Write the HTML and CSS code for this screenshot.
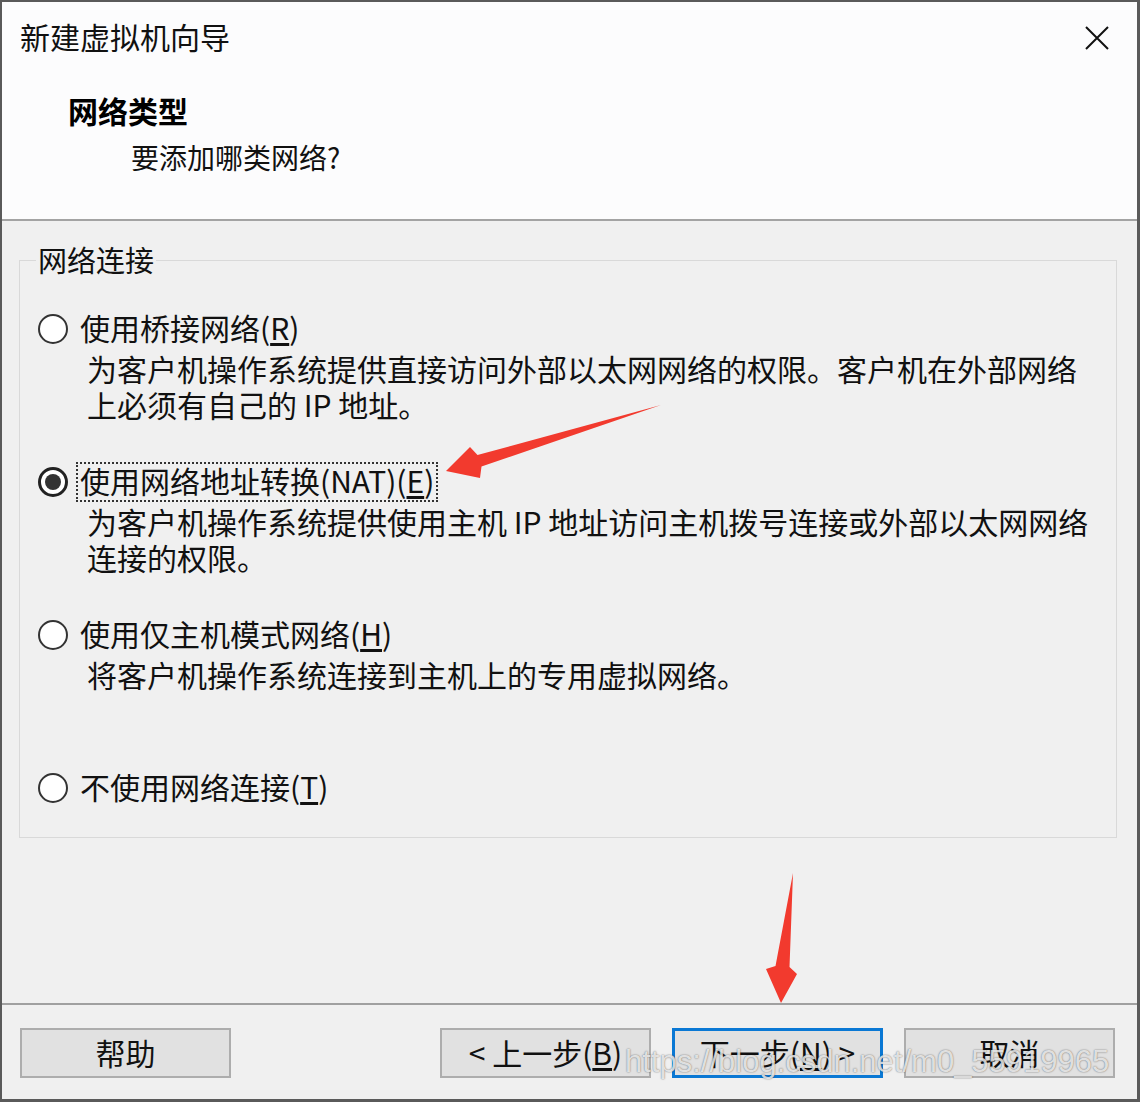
FILE: index.html
```html
<!DOCTYPE html>
<html lang="zh-CN">
<head>
<meta charset="utf-8">
<title>新建虚拟机向导</title>
<link rel="stylesheet" href="styles.css">
</head>
<body>
<div class="page">
  <div class="window">
    <header class="header">
      <div class="titlebar">
        <span class="title">新建虚拟机向导</span>
        <svg class="close" width="24" height="24" viewBox="0 0 24 24"><path d="M1 1 L23 23 M23 1 L1 23" stroke="#111" stroke-width="2" fill="none"/></svg>
      </div>
      <div class="heading">网络类型</div>
      <div class="subheading">要添加哪类网络?</div>
    </header>
    <main class="body">
      <fieldset class="group">
        <legend>网络连接</legend>
        <div class="options">
          <div class="option">
            <div class="opt-row"><span class="radio"></span><span class="label">使用桥接网络(<u>R</u>)</span></div>
            <div class="desc">为客户机操作系统提供直接访问外部以太网网络的权限。客户机在外部网络<br>上必须有自己的 IP 地址。</div>
          </div>
          <div class="option">
            <div class="opt-row"><span class="radio checked"></span><span class="label focused">使用网络地址转换(NAT)(<u>E</u>)</span></div>
            <div class="desc">为客户机操作系统提供使用主机 IP 地址访问主机拨号连接或外部以太网网络<br>连接的权限。</div>
          </div>
          <div class="option">
            <div class="opt-row"><span class="radio"></span><span class="label">使用仅主机模式网络(<u>H</u>)</span></div>
            <div class="desc">将客户机操作系统连接到主机上的专用虚拟网络。</div>
          </div>
          <div class="option last">
            <div class="opt-row"><span class="radio"></span><span class="label">不使用网络连接(<u>T</u>)</span></div>
          </div>
        </div>
      </fieldset>
    </main>
    <footer class="footer">
      <button class="btn">帮助</button>
      <div class="nav">
        <button class="btn">&lt; 上一步(<u>B</u>)</button>
        <button class="btn default">下一步(<u>N</u>) &gt;</button>
        <button class="btn">取消</button>
      </div>
    </footer>
  </div>
  <svg class="annotations" width="1140" height="1102" viewBox="0 0 1140 1102">
    <polygon points="446,471 470,447 477.5,455 661,405 481.5,466.5 480,478" fill="#f23a2e"/>
    <polygon points="793,873 789.5,967 797,974 781,1003 766,969 775.5,966" fill="#f23a2e"/>
  </svg>
  <div class="watermark">https://blog.csdn.net/m0_55919965</div>
</div>
</body>
</html>
```
FILE: styles.css
```css
* { box-sizing: border-box; }

body {
  margin: 0;
  font-family: "Noto Sans CJK SC", "Noto Sans", sans-serif;
  color: #000;
}

.page {
  position: relative;
  width: 1140px;
  height: 1102px;
  overflow: hidden;
  background: #f0f0f0;
}

.window {
  width: 1140px;
  height: 1102px;
  border: 2px solid #5a5a5a;
  border-right-width: 3px;
  border-bottom-width: 3px;
  display: flex;
  flex-direction: column;
  background: #f0f0f0;
}

/* Header */
.header {
  flex: none;
  height: 219px;
  background: #fcfcfd;
  border-bottom: 2px solid #a3a3a3;
  padding: 14px 28px 0 18px;
}

.titlebar {
  display: flex;
  align-items: center;
  justify-content: space-between;
  height: 40px;
}

.title {
  font-size: 30px;
  line-height: 40px;
  color: #111;
}

.close { display: block; margin-top: 3px; }

.heading {
  margin: 34px 0 0 48px;
  font-size: 30px;
  line-height: 40px;
  font-weight: 700;
}

.subheading {
  margin: 7px 0 0 111px;
  font-size: 28px;
  line-height: 40px;
  color: #111;
}

/* Body */
.body {
  flex: 1;
  padding: 21px 20px 0 17px;
}

.group {
  margin: 0;
  padding: 30px 0 29px 0;
  border: 1px solid #d9d9d9;
  min-width: 0;
}

.group legend {
  margin-left: 16px;
  padding: 0 2px 3px;
  font-size: 29px;
  line-height: 34px;
  color: #111;
}

.options {
  display: flex;
  flex-direction: column;
  gap: 38px;
  padding-left: 18px;
}

.option { min-height: 115px; }
.option.last { min-height: 0; }

.opt-row {
  display: flex;
  align-items: center;
  height: 40px;
}

.radio {
  position: relative;
  flex: none;
  width: 30px;
  height: 30px;
  border: 2px solid #333;
  border-radius: 50%;
  background: #fff;
  margin-right: 8px;
}

.radio.checked { border-width: 3px; border-color: #222; }

.radio.checked::after {
  content: "";
  position: absolute;
  left: 4px;
  top: 4px;
  width: 16px;
  height: 16px;
  border-radius: 50%;
  background: #333;
}

.label {
  padding: 0 2px 3px;
  border: 2px dotted transparent;
  font-size: 30px;
  line-height: 33px;
  color: #111;
}

.label.focused { border-color: #333; }

.label u, .btn u { text-underline-offset: 3px; }

.desc {
  margin-top: 1px;
  padding-left: 49px;
  font-size: 30px;
  line-height: 36px;
  color: #111;
}

/* Footer */
.footer {
  flex: none;
  height: 96px;
  border-top: 2px solid #a0a0a0;
  padding: 23px 22px 0 18px;
  display: flex;
  align-items: flex-start;
}

.nav {
  margin-left: auto;
  display: flex;
  gap: 21px;
}

.btn {
  width: 211px;
  height: 50px;
  border: 2px solid #adadad;
  background: #e1e1e1;
  font-family: inherit;
  font-size: 30px;
  line-height: 40px;
  color: #111;
  padding: 0 0 3px;
}

.btn.default { border: 3px solid #0a78d4; }

/* Overlays */
.annotations {
  position: absolute;
  left: 0;
  top: 0;
  pointer-events: none;
}

.watermark {
  position: absolute;
  left: 625px;
  top: 1046px;
  font-family: "Liberation Sans", Arial, sans-serif;
  font-size: 31px;
  line-height: 31px;
  color: rgba(255, 255, 255, 0.8);
  text-shadow: 0 0 2px rgba(0, 0, 0, 0.35), 0 0 1px rgba(0, 0, 0, 0.35);
  white-space: nowrap;
  pointer-events: none;
}
```
